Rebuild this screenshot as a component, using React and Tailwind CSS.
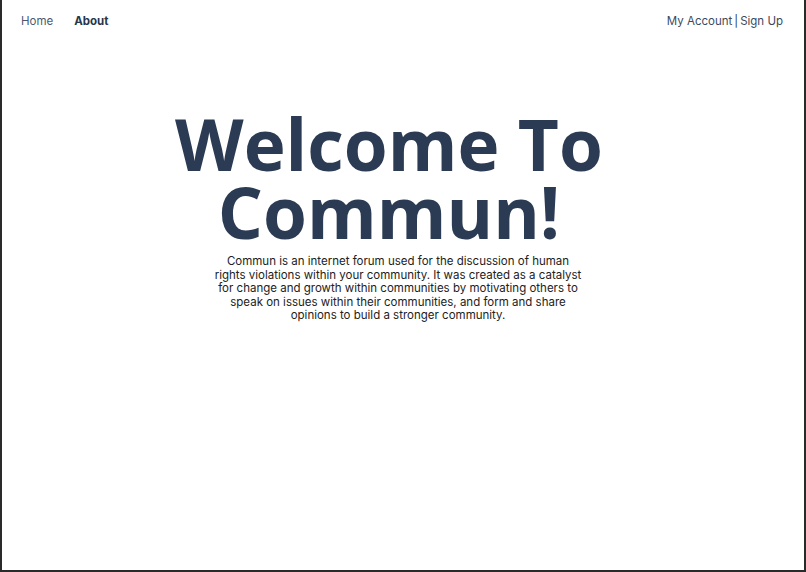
import React from 'react';

const App = () => {
  return (
    <div className="w-[806px] h-[572px] bg-white border-x-2 border-b-2 border-[#2a2a2a] flex flex-col font-['Inter',sans-serif]">
      {/* Top nav */}
      <header className="flex items-center justify-between h-[40px] pt-[4px] pl-[19px] pr-[21px]">
        <nav className="flex items-center gap-[21px] text-[11.5px]">
          <a className="text-[#4b5a70]">Home</a>
          <a className="font-bold text-[#26364d]">About</a>
        </nav>
        <div className="flex items-center text-[11.5px] text-[#3b4a60]">
          <a>My Account</a>
          <span className="mx-[2px] text-[#26364d]">|</span>
          <a>Sign Up</a>
        </div>
      </header>

      {/* Hero */}
      <main className="flex flex-col items-center pt-[70px]">
        <h1 className="pr-[28px] text-center text-[71px] leading-[68px] font-bold text-[#2b3b53] font-['Open_Sans',sans-serif]">
          Welcome To<br />Commun!
        </h1>
        <p className="mt-[9px] mr-[10px] w-[374px] text-center text-[11.5px] leading-[13.5px] text-[#222]">
          Commun is an internet forum used for the discussion of human rights violations within your community. It was created as a catalyst for change and growth within communities by motivating others to speak on issues within their communities, and form and share opinions to build a stronger community.
        </p>
      </main>
    </div>
  );
};

export default App;
